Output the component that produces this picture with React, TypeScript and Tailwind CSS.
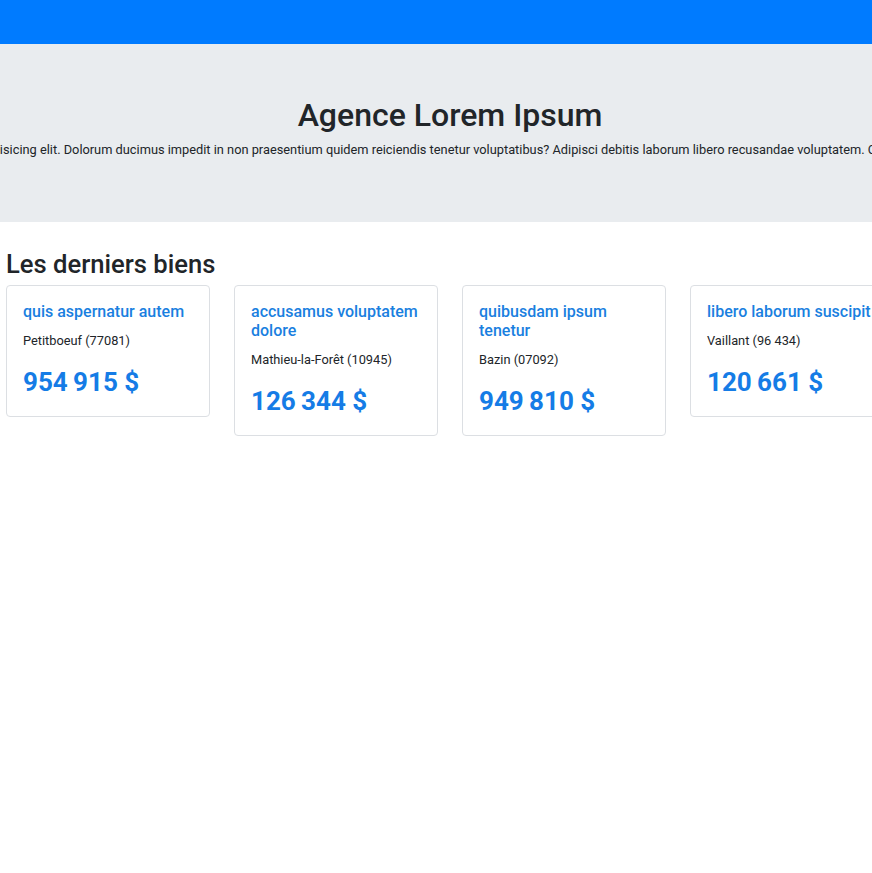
import React from "react";

type Bien = { title: string; city: string; price: string };

const biens: Bien[] = [
  { title: "quis aspernatur autem", city: "Petitboeuf (77081)", price: "954\u2009915 $" },
  { title: "accusamus voluptatem dolore", city: "Mathieu-la-Forêt (10945)", price: "126\u2009344 $" },
  { title: "quibusdam ipsum tenetur", city: "Bazin (07092)", price: "949\u2009810 $" },
  { title: "libero laborum suscipit", city: "Vaillant (96 434)", price: "120\u2009661 $" },
];

function Card({ b }: { b: Bien }) {
  return (
    <div className="w-[204px] shrink-0 self-start rounded-[4px] border border-[#dcdfe3] bg-white px-4 pt-4 pb-[18px]">
      <h5 className="mb-[10px] text-[16px] font-medium leading-[1.2] text-[#1a7fe0]">{b.title}</h5>
      <p className="mb-[17px] text-[12.8px] leading-[1.5] text-[#212529]">{b.city}</p>
      <div className="text-[26px] font-bold leading-[1.2] text-[#157ce6]">{b.price}</div>
    </div>
  );
}

export default function App() {
  return (
    <div
      className="min-h-[873px] w-full overflow-hidden bg-white text-[#212529]"
      style={{ fontFamily: "Roboto, 'Noto Sans', sans-serif" }}
    >
      <nav className="h-[44px] w-full bg-[#007bff]" />
      <div className="w-full bg-[#e9ecef]">
        <div className="flex h-[178px] w-[900px] flex-col items-center pt-[52px]">
          <h1 className="mb-[6px] text-[32px] font-medium leading-[1.2] text-[#212529]">Agence Lorem Ipsum</h1>
          <div className="flex w-[900px] justify-center">
            <p className="shrink-0 whitespace-nowrap text-[12.8px] leading-[1.5] text-[#212529]">
              Lorem ipsum dolor sit amet consectetur adipisicing elit. Dolorum ducimus impedit in non praesentium quidem reiciendis tenetur voluptatibus? Adipisci debitis laborum libero recusandae voluptatem. Culpa, quasi? Voluptates dolorem eaque fugiat illo.
            </p>
          </div>
        </div>
      </div>
      <div className="w-[900px] px-[6px] pt-[27px]">
        <h2 className="mb-[5px] text-[25.6px] font-medium leading-[1.2] text-[#212529]">Les derniers biens</h2>
        <div className="flex gap-6">
          {biens.map((b) => (
            <Card key={b.title} b={b} />
          ))}
        </div>
      </div>
    </div>
  );
}
